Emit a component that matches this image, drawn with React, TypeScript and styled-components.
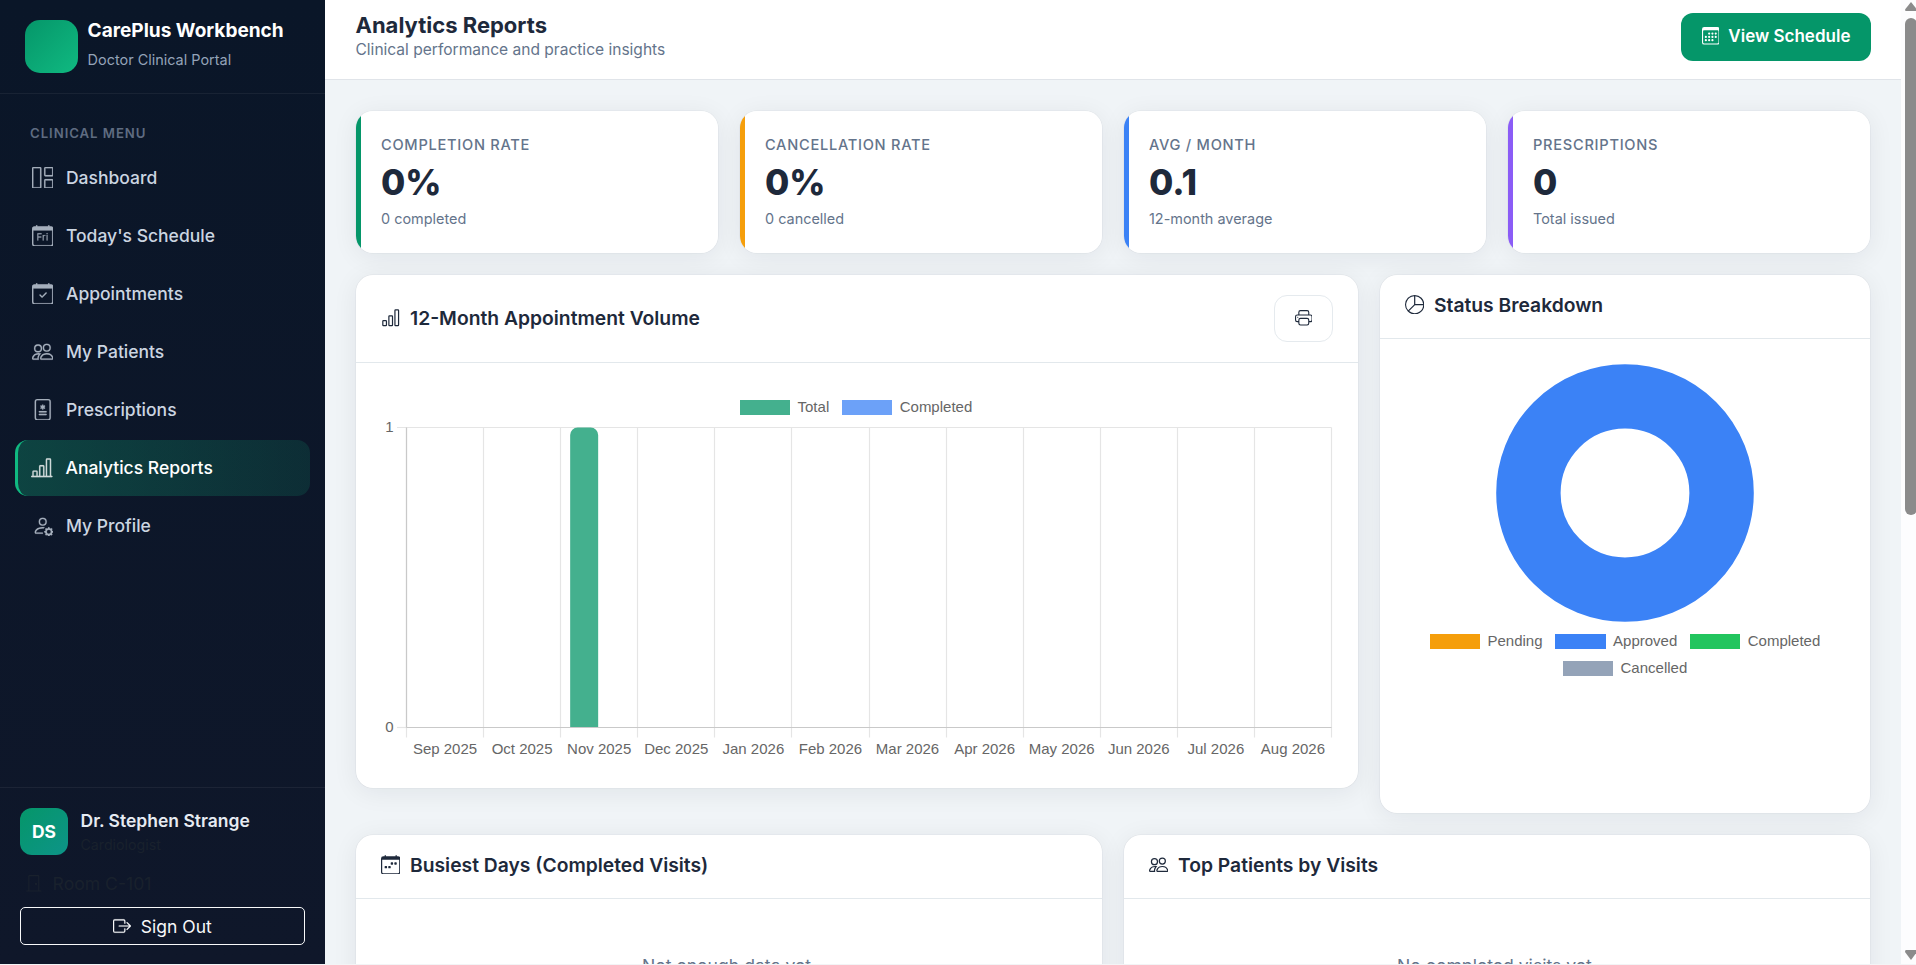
import React from 'react';
import styled, { createGlobalStyle } from 'styled-components';
import {
  BsBarChart,
  BsBarChartLine,
  BsBoxArrowRight,
  BsCalendar3,
  BsCalendarCheck,
  BsCalendarDay,
  BsCalendarWeek,
  BsDoorClosed,
  BsFileMedical,
  BsGrid1X2,
  BsPeople,
  BsPersonGear,
  BsPieChart,
  BsPrinter,
} from 'react-icons/bs';

const GlobalStyle = createGlobalStyle`
  *, *::before, *::after { box-sizing: border-box; }
  html, body { margin: 0; height: 965px; overflow: hidden; background: #f3f4f6; }
  body { font-family: Inter, "Liberation Sans", sans-serif; color: #1e293b; font-size: 17.6px; }
  button { font: inherit; margin: 0; }
  svg { display: block; flex: none; }
`;

const Shell = styled.div`
  display: flex;
  width: 1916px;
  height: 964px;
  overflow: hidden;
`;

/* Sidebar */

const Sidebar = styled.aside`
  display: flex;
  flex-direction: column;
  flex: none;
  width: 325px;
  background: linear-gradient(180deg, #0a1628 0%, #0f172a 100%);
`;

const Brand = styled.div`
  display: flex;
  align-items: center;
  gap: 9.6px;
  flex: none;
  height: 94px;
  padding: 0 25px;
  border-bottom: 1px solid rgba(255, 255, 255, 0.06);
`;

const BrandMark = styled.div`
  width: 53px;
  height: 53px;
  border-radius: 15px;
  background: linear-gradient(135deg, #059669, #10b981);
`;

const BrandText = styled.div`
  display: flex;
  flex-direction: column;
  gap: 7px;
  padding-bottom: 3px;
`;

const BrandName = styled.div`
  color: #fff;
  font-size: 19.05px;
  font-weight: 700;
  line-height: 23px;
  white-space: nowrap;
`;

const BrandSub = styled.div`
  color: #94a3b8;
  font-size: 14.45px;
  line-height: 22px;
`;

const MenuLabel = styled.div`
  padding: 29px 30px 6px;
  color: #5f6c81;
  font-size: 13.2px;
  font-weight: 600;
  letter-spacing: 0.95px;
  line-height: 21px;
`;

const Nav = styled.nav`
  display: flex;
  flex-direction: column;
  gap: 2px;
  padding: 0 15px;
`;

const NavItem = styled.a<{ $active?: boolean }>`
  display: flex;
  align-items: center;
  gap: 12.8px;
  height: 56px;
  padding-bottom: 1.2px;
  padding-left: ${(p) => (p.$active ? 13.2 : 16.7)}px;
  border-left: ${(p) => (p.$active ? '3px solid #10b981' : '0')};
  border-radius: 13px;
  background: ${(p) =>
    p.$active ? 'linear-gradient(90deg, rgba(16,185,129,.28), rgba(16,185,129,.14))' : 'none'};
  color: ${(p) => (p.$active ? '#fff' : '#cbd5e1')};
  font-size: 17.5px;
  font-weight: 500;

  svg { width: 21.5px; height: 21.5px; opacity: 0.8; stroke-width: 0.12; }
`;

const SidebarFooter = styled.div`
  display: flex;
  flex-direction: column;
  margin-top: auto;
  height: 177px;
  padding: 19.5px 20px 0;
  border-top: 1px solid rgba(255, 255, 255, 0.06);
`;

const UserRow = styled.div`
  display: flex;
  align-items: center;
  gap: 12.5px;
  height: 47px;
`;

const Avatar = styled.div`
  display: grid;
  place-items: center;
  width: 48px;
  height: 47px;
  border-radius: 12px;
  background: linear-gradient(135deg, #059669, #0d9488);
  color: #fff;
  font-size: 17.4px;
  font-weight: 700;
`;

const UserName = styled.div`
  color: #e6ebf2;
  font-size: 17.5px;
  font-weight: 600;
  line-height: 26px;
`;

const UserRole = styled.div`
  color: #19212d;
  font-size: 14.2px;
  line-height: 21px;
`;

const Room = styled.div`
  display: flex;
  align-items: center;
  gap: 10px;
  height: 26px;
  margin: 15.5px 0 11px 5px;
  color: #19212d;
  font-size: 17.6px;
`;

const SignOut = styled.button`
  display: flex;
  align-items: center;
  justify-content: center;
  gap: 9.6px;
  width: 285px;
  height: 38px;
  padding: 0;
  border: 1px solid #f8f9fa;
  border-radius: 5px;
  background: transparent;
  color: #f8f9fa;
  font-size: 17.5px;

  svg { stroke-width: 0.15; }
`;

/* Main column */

const Main = styled.main`
  display: flex;
  flex-direction: column;
  flex: none;
  width: 1576px;
  background: #f0f4f7;
`;

const TopBar = styled.header`
  display: flex;
  align-items: flex-start;
  justify-content: space-between;
  flex: none;
  height: 80px;
  padding: 12px 30px 0 30.5px;
  border-bottom: 1px solid #e0e4e9;
  background: #fff;
`;

const PageTitle = styled.h1`
  margin: 0;
  font-size: 22px;
  font-weight: 700;
  line-height: 26px;
`;

const PageSub = styled.div`
  color: #64748b;
  font-size: 15.55px;
  line-height: 23px;
`;

const ScheduleButton = styled.button`
  display: flex;
  align-items: center;
  justify-content: center;
  gap: 9.2px;
  width: 190px;
  height: 48px;
  margin-top: 1px;
  padding: 0 0 2px;
  border: 0;
  border-radius: 12px;
  background: #059669;
  color: #fff;
  font-size: 17px;
  font-weight: 600;
  white-space: nowrap;
`;

const Content = styled.div`
  display: flex;
  flex-direction: column;
  gap: 22px;
  padding: 31px;
`;

const StatGrid = styled.div`
  display: grid;
  grid-template-columns: repeat(4, 1fr);
  gap: 22px;
`;

const Card = styled.section`
  border-radius: 17px;
  background: #fff;
  box-shadow: 0 0 0 0.6px rgba(15, 23, 42, 0.05), 0 4px 26px rgba(15, 23, 42, 0.07);
`;

const StatCard = styled(Card)<{ $accent: string }>`
  display: flex;
  flex-direction: column;
  height: 142px;
  padding: 23px 25px 0;
  background: linear-gradient(90deg, ${(p) => p.$accent} 5px, #fff 5px);
`;

const StatLabel = styled.div`
  color: #64748b;
  font-size: 14.6px;
  font-weight: 500;
  letter-spacing: 0.73px;
  line-height: 23px;
`;

const StatValue = styled.div`
  margin: 3px 0 4px;
  font-size: 35.2px;
  font-weight: 800;
  line-height: 44px;
`;

const StatNote = styled.div`
  color: #64748b;
  font-size: 14.45px;
  line-height: 22px;
`;

const ChartRow = styled.div`
  display: grid;
  grid-template-columns: 1002px 490px;
  gap: 22px;
  align-items: start;
`;

const TableRow = styled.div`
  display: grid;
  grid-template-columns: 1fr 1fr;
  gap: 22px;
`;

const VolumeCard = styled(Card)`
  height: 513px;
`;

const StatusCard = styled(Card)`
  height: 538px;
`;

const ListCard = styled(Card)`
  height: 300px;
`;

const CardHeader = styled.div<{ $tall?: boolean }>`
  display: flex;
  align-items: center;
  justify-content: space-between;
  height: ${(p) => (p.$tall ? 88 : 64)}px;
  padding: 0 25px ${(p) => (p.$tall ? 1 : 3)}px;
  border-bottom: 1px solid #e2e8ec;
`;

const CardTitle = styled.h2`
  display: flex;
  align-items: center;
  gap: 9.6px;
  margin: 0;
  padding-bottom: 1px;
  font-size: 19.3px;
  font-weight: 600;
  white-space: nowrap;
`;

const PrintButton = styled.button`
  display: grid;
  place-items: center;
  width: 59px;
  height: 47px;
  padding: 0 0 1px;
  border: 1px solid #e5eaee;
  border-radius: 13px;
  background: #fff;
  color: #1e293b;
`;

const EmptyNote = styled.div`
  padding-top: 54px;
  color: #64748b;
  text-align: center;
  font-size: 17.6px;
  line-height: 26px;
`;

const Legend = styled.div`
  display: flex;
  flex-wrap: wrap;
  justify-content: center;
  column-gap: 12.7px;
  row-gap: 8px;
  color: #666;
  font: 15px/19px "Liberation Sans", Arial, sans-serif;
`;

const LegendItem = styled.span`
  display: flex;
  align-items: center;
  gap: 7.3px;
`;

const Swatch = styled.span<{ $color: string }>`
  width: 50.5px;
  height: 15.3px;
  margin-top: 2px;
  background: ${(p) => p.$color};
`;

const VolumeBody = styled.div`
  display: flex;
  flex-direction: column;
  gap: 2px;
  padding-top: 34px;

  ${Legend} { padding-right: 2px; }
`;

const StatusBody = styled.div`
  display: flex;
  flex-direction: column;
  align-items: center;
  gap: 9px;
  padding: 25px 40px 0;
`;

const AxisText = styled.text`
  font: 15px "Liberation Sans", Arial, sans-serif;
  fill: #666;
`;

const ScrollTrack = styled.div`
  display: flex;
  flex-direction: column;
  justify-content: space-between;
  width: 15px;
  height: 964px;
  padding: 2px 0 4px 3.5px;
  background: #fdfdfe;
`;

const ScrollThumb = styled.div`
  width: 11.5px;
  height: 497px;
  margin: 6px 0 auto 0.5px;
  border-radius: 6px;
  background: #8b8b8b;
`;

const NAV = [
  { label: 'Dashboard', icon: BsGrid1X2 },
  { label: "Today's Schedule", icon: BsCalendarDay },
  { label: 'Appointments', icon: BsCalendarCheck },
  { label: 'My Patients', icon: BsPeople },
  { label: 'Prescriptions', icon: BsFileMedical },
  { label: 'Analytics Reports', icon: BsBarChartLine, active: true },
  { label: 'My Profile', icon: BsPersonGear },
];

const STATS = [
  { label: 'COMPLETION RATE', value: '0%', note: '0 completed', accent: '#059669' },
  { label: 'CANCELLATION RATE', value: '0%', note: '0 cancelled', accent: '#f59e0b' },
  { label: 'AVG / MONTH', value: '0.1', note: '12-month average', accent: '#3b82f6' },
  { label: 'PRESCRIPTIONS', value: '0', note: 'Total issued', accent: '#8b5cf6' },
];

const MONTHS: [string, number][] = [
  ['Sep 2025', 0], ['Oct 2025', 0], ['Nov 2025', 1], ['Dec 2025', 0],
  ['Jan 2026', 0], ['Feb 2026', 0], ['Mar 2026', 0], ['Apr 2026', 0],
  ['May 2026', 0], ['Jun 2026', 0], ['Jul 2026', 0], ['Aug 2026', 0],
];

const PLOT = { left: 50.5, right: 975.5, top: 9.5, bottom: 309.5 };

function VolumeChart() {
  const step = (PLOT.right - PLOT.left) / MONTHS.length;
  const snap = (v: number) => Math.floor(v) + 0.5;
  const h = PLOT.bottom - PLOT.top;
  return (
    <svg width="1002" height="345" viewBox="0 0 1002 345">
      <g stroke="#e5e5e5" strokeWidth="1.2">
        <line x1="41" x2={PLOT.right} y1={PLOT.top} y2={PLOT.top} />
        <line x1="41" x2="50" y1={PLOT.bottom} y2={PLOT.bottom} />
        {[...MONTHS, null].map((_, i) => (
          <line
            key={i}
            x1={snap(PLOT.left + i * step)}
            x2={snap(PLOT.left + i * step)}
            y1={PLOT.top}
            y2={PLOT.bottom + 10}
          />
        ))}
      </g>
      {MONTHS.map(([label, total], i) => {
        const x = PLOT.left + i * step + 9.5;
        const top = PLOT.bottom - total * h;
        return (
          <g key={label}>
            {total > 0 && (
              <path
                d={`M${x} ${PLOT.bottom}V${top + 7.5}a7.5 7.5 0 0 1 7.5-7.5h13a7.5 7.5 0 0 1 7.5 7.5V${PLOT.bottom}z`}
                fill="#44b08e"
              />
            )}
            <AxisText x={PLOT.left + (i + 0.5) * step} y="336" textAnchor="middle">
              {label}
            </AxisText>
          </g>
        );
      })}
      <g stroke="#c9c9c9" strokeWidth="1.2">
        <line x1={PLOT.left} x2={PLOT.left} y1={PLOT.top} y2={PLOT.bottom} />
        <line x1={PLOT.left} x2={PLOT.right} y1={PLOT.bottom} y2={PLOT.bottom} />
      </g>
      <AxisText x="37.5" y="14" textAnchor="end">1</AxisText>
      <AxisText x="37.5" y="314" textAnchor="end">0</AxisText>
    </svg>
  );
}

function LegendEntry({ color, label }: { color: string; label: string }) {
  return (
    <LegendItem>
      <Swatch $color={color} />
      {label}
    </LegendItem>
  );
}

export default function App() {
  return (
    <>
      <GlobalStyle />
      <Shell>
        <Sidebar>
          <Brand>
            <BrandMark />
            <BrandText>
              <BrandName>CarePlus Workbench</BrandName>
              <BrandSub>Doctor Clinical Portal</BrandSub>
            </BrandText>
          </Brand>
          <MenuLabel>CLINICAL MENU</MenuLabel>
          <Nav>
            {NAV.map(({ label, icon: Icon, active }) => (
              <NavItem key={label} $active={active}>
                <Icon />
                {label}
              </NavItem>
            ))}
          </Nav>
          <SidebarFooter>
            <UserRow>
              <Avatar>DS</Avatar>
              <div>
                <UserName>Dr. Stephen Strange</UserName>
                <UserRole>Cardiologist</UserRole>
              </div>
            </UserRow>
            <Room>
              <BsDoorClosed size={17.6} />
              Room C-101
            </Room>
            <SignOut>
              <BsBoxArrowRight size={18} />
              Sign Out
            </SignOut>
          </SidebarFooter>
        </Sidebar>

        <Main>
          <TopBar>
            <div>
              <PageTitle>Analytics Reports</PageTitle>
              <PageSub>Clinical performance and practice insights</PageSub>
            </div>
            <ScheduleButton>
              <BsCalendar3 size={17.6} />
              View Schedule
            </ScheduleButton>
          </TopBar>

          <Content>
            <StatGrid>
              {STATS.map((s) => (
                <StatCard key={s.label} $accent={s.accent}>
                  <StatLabel>{s.label}</StatLabel>
                  <StatValue>{s.value}</StatValue>
                  <StatNote>{s.note}</StatNote>
                </StatCard>
              ))}
            </StatGrid>

            <ChartRow>
              <VolumeCard>
                <CardHeader $tall>
                  <CardTitle>
                    <BsBarChart size={19.4} />
                    12-Month Appointment Volume
                  </CardTitle>
                  <PrintButton>
                    <BsPrinter size={17.6} />
                  </PrintButton>
                </CardHeader>
                <VolumeBody>
                  <Legend>
                    <LegendEntry color="#44b08e" label="Total" />
                    <LegendEntry color="#6ca1f8" label="Completed" />
                  </Legend>
                  <VolumeChart />
                </VolumeBody>
              </VolumeCard>

              <StatusCard>
                <CardHeader>
                  <CardTitle>
                    <BsPieChart size={19.4} />
                    Status Breakdown
                  </CardTitle>
                </CardHeader>
                <StatusBody>
                  <svg width="258" height="258" viewBox="0 0 258 258">
                    <circle cx="129" cy="129" r="96.6" fill="none" stroke="#3b82f6" strokeWidth="64.4" />
                  </svg>
                  <Legend>
                    <LegendEntry color="#f59e0b" label="Pending" />
                    <LegendEntry color="#3b82f6" label="Approved" />
                    <LegendEntry color="#22c55e" label="Completed" />
                    <LegendEntry color="#94a3b8" label="Cancelled" />
                  </Legend>
                </StatusBody>
              </StatusCard>
            </ChartRow>

            <TableRow>
              <ListCard>
                <CardHeader>
                  <CardTitle>
                    <BsCalendarWeek size={19.4} />
                    Busiest Days (Completed Visits)
                  </CardTitle>
                </CardHeader>
                <EmptyNote>Not enough data yet.</EmptyNote>
              </ListCard>
              <ListCard>
                <CardHeader>
                  <CardTitle>
                    <BsPeople size={19.4} />
                    Top Patients by Visits
                  </CardTitle>
                </CardHeader>
                <EmptyNote>No completed visits yet.</EmptyNote>
              </ListCard>
            </TableRow>
          </Content>
        </Main>

        <ScrollTrack>
          <svg width="12" height="10" viewBox="0 0 12 10">
            <path d="M6 0 12 7.5Q12 9 11 9H1Q0 9 0 7.5z" fill="#8b8b8b" />
          </svg>
          <ScrollThumb />
          <svg width="12" height="10" viewBox="0 0 12 10">
            <path d="M6 10 12 2Q12 0 11 0H1Q0 0 0 2z" fill="#8b8b8b" />
          </svg>
        </ScrollTrack>
      </Shell>
    </>
  );
}
